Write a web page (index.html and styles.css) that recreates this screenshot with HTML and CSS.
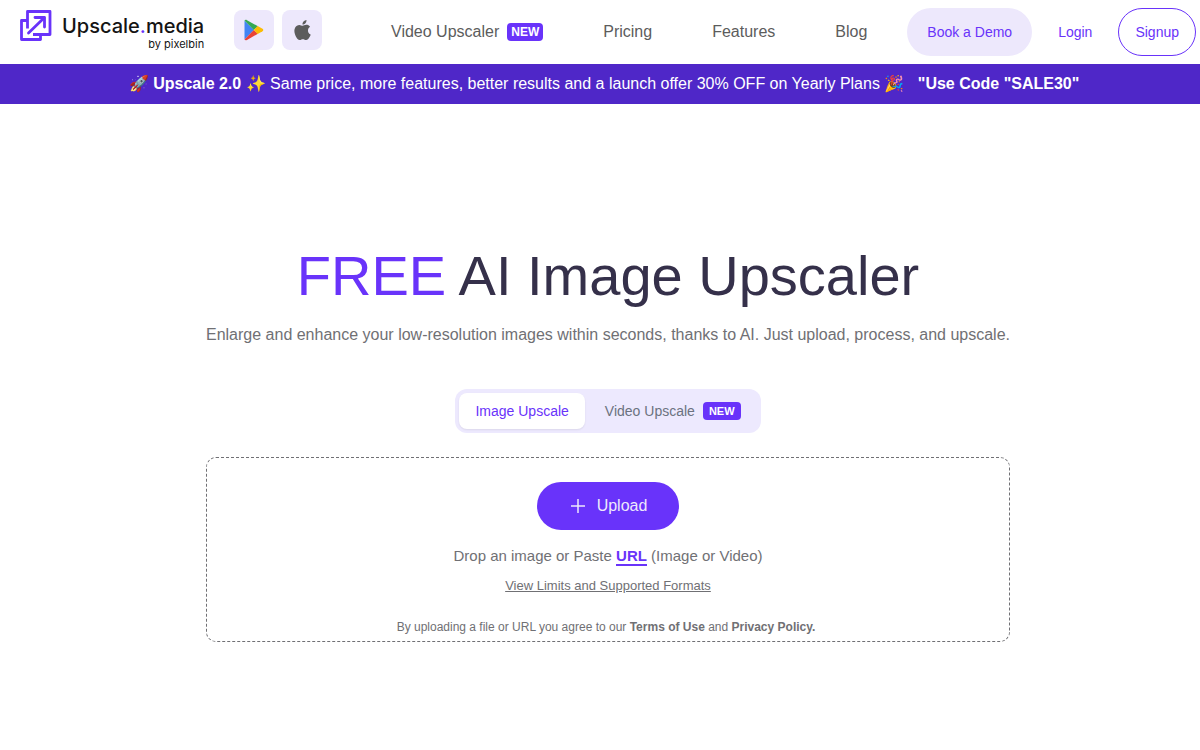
FILE: index.html
```html
<!DOCTYPE html>
<html lang="en">
<head>
<meta charset="utf-8">
<meta name="viewport" content="width=device-width, initial-scale=1">
<title>Upscale.media</title>
<link rel="stylesheet" href="styles.css">
</head>
<body>
<header class="header">
  <a class="logo" href="#">
    <svg class="logo-mark" viewBox="0 0 32 32" fill="none" stroke="currentColor" stroke-width="2.800" stroke-linejoin="round" aria-hidden="true">
      <path d="M7.500 10.500h-6v19h19v-5"/>
      <path d="M7.500 18.500V1.500h22.500v23H13"/>
      <path d="M8.500 23L24 8" stroke-linecap="round"/>
      <path d="M15 7.500h9.500V17" stroke-linecap="round"/>
    </svg>
    <span class="logo-text">
      <span class="logo-name">Upscale<span class="accent">.</span>media</span>
      <span class="logo-by">by pixelbin</span>
    </span>
  </a>
  <div class="stores">
    <a class="store" href="#" aria-label="Google Play">
      <svg class="play-icon" viewBox="0 0 20 22" aria-hidden="true">
        <path fill="#4285f4" d="M.500 1.500v19l9.500-9.500z"/>
        <path fill="#34a853" d="M.500 1.500C1 .7 2.100.7 3 1.200L14 7.300 9.800 11z"/>
        <path fill="#ea4335" d="M.500 20.500c.5.900 1.600.9 2.500.4L14 14.700 9.800 11z"/>
        <path fill="#fbbc04" d="M13.700 7l4.800 2.700c1 .6 1 2 0 2.600L13.700 15 9.800 11z"/>
      </svg>
    </a>
    <a class="store" href="#" aria-label="App Store">
      <svg class="apple-icon" viewBox="2 0 20 24" aria-hidden="true">
        <path fill="#5c5c5c" d="M12.152 6.896c-.948 0-2.415-1.078-3.960-1.040-2.040.027-3.910 1.183-4.961 3.014-2.117 3.675-.546 9.103 1.519 12.090 1.013 1.454 2.208 3.090 3.792 3.039 1.520-.065 2.090-.987 3.935-.987 1.831 0 2.350.987 3.960.948 1.637-.026 2.676-1.480 3.676-2.948 1.156-1.688 1.636-3.325 1.662-3.415-.039-.013-3.182-1.221-3.220-4.857-.026-3.040 2.480-4.494 2.597-4.559-1.429-2.090-3.623-2.324-4.390-2.376-2-.156-3.675 1.090-4.610 1.090zM15.530 3.830c.843-1.012 1.400-2.427 1.245-3.830-1.207.052-2.662.805-3.532 1.818-.780.896-1.454 2.338-1.273 3.714 1.338.104 2.715-.688 3.559-1.701"/>
      </svg>
    </a>
  </div>
  <nav class="nav">
    <a class="nav-link" href="#">Video Upscaler <span class="badge">NEW</span></a>
    <a class="nav-link" href="#">Pricing</a>
    <a class="nav-link" href="#">Features</a>
    <a class="nav-link" href="#">Blog</a>
  </nav>
  <div class="actions">
    <button class="btn btn-demo" type="button">Book a Demo</button>
    <button class="btn btn-login" type="button">Login</button>
    <button class="btn btn-signup" type="button">Signup</button>
  </div>
</header>
<aside class="banner">🚀 <b>Upscale 2.0</b> ✨ Same price, more features, better results and a launch offer 30% OFF on Yearly Plans 🎉 <b class="code">"Use Code "SALE30"</b></aside>
<main class="main">
  <section class="hero">
    <h1 class="title"><span class="accent">FREE</span> AI Image Upscaler</h1>
    <p class="subtitle">Enlarge and enhance your low-resolution images within seconds, thanks to AI. Just upload, process, and upscale.</p>
    <div class="tabs" role="tablist">
      <button class="tab tab-active" type="button" role="tab" aria-selected="true">Image Upscale</button>
      <button class="tab" type="button" role="tab" aria-selected="false">Video Upscale <span class="badge badge-small">NEW</span></button>
    </div>
    <div class="dropzone">
      <button class="upload" type="button">
        <svg class="plus" viewBox="0 0 20 20" fill="none" stroke="currentColor" stroke-width="1.500" aria-hidden="true"><path d="M9 3v14M2 10h14"/></svg>
        Upload
      </button>
      <p class="drop-text">Drop an image or Paste <a class="url" href="#">URL</a> (Image or Video)</p>
      <a class="limits" href="#">View Limits and Supported Formats</a>
      <p class="terms">By uploading a file or URL you agree to our <a class="legal" href="#">Terms of Use</a> and <a class="legal" href="#">Privacy Policy.</a></p>
    </div>
  </section>
</main>
</body>
</html>
```
FILE: styles.css
```css
* { box-sizing: border-box; }

body {
  margin: 0;
  background: #fff;
  color: #707074;
  font-family: "Liberation Sans", Arial, sans-serif;
}

a { color: inherit; text-decoration: none; }
button { font-family: inherit; border: 0; cursor: pointer; }
p, h1 { margin: 0; }
.accent { color: #6933fa; }

.header {
  display: flex;
  align-items: center;
  min-height: 64px;
  padding: 0 4px 0 20px;
}

.logo { display: flex; align-items: flex-start; gap: 10px; height: 44px; }
.logo-mark { width: 32px; height: 32px; color: #6933fa; }
.logo-text {
  display: flex;
  flex-direction: column;
  align-items: flex-end;
  padding-top: 4px;
  color: #141414;
  font-family: Inter, sans-serif;
}
.logo-name { font-size: 20px; line-height: 24px; font-weight: 500; }
.logo-by { font-size: 11px; line-height: 12px; }

.stores { display: flex; gap: 8px; margin-left: 30px; padding-bottom: 4px; }
.store {
  display: flex;
  align-items: center;
  justify-content: center;
  width: 40px;
  height: 40px;
  border-radius: 8px;
  background: #ede8fc;
}
.play-icon { width: 20px; height: 22px; }
.apple-icon { width: 17px; height: 20px; }

.nav { display: flex; gap: 60px; margin-left: auto; }
.nav-link {
  display: flex;
  align-items: center;
  gap: 8px;
  color: #5c5c5c;
  font-size: 16px;
  line-height: 20px;
}

.badge {
  padding: 0 4px;
  border-radius: 4px;
  background: #6933fa;
  color: #fff;
  font-size: 12px;
  line-height: 18px;
  font-weight: 700;
}
.badge-small { padding: 0 6px; font-size: 11px; }

.actions { display: flex; align-items: center; margin-left: 40px; }
.btn {
  height: 48px;
  border-radius: 24px;
  background: none;
  color: #6933fa;
  font-size: 14px;
}
.btn-demo { padding: 0 20px; background: #ede8fc; }
.btn-login { padding: 0 26px; }
.btn-signup { padding: 0 16px; border: 1px solid #6933fa; }

.banner {
  padding: 8px 0 8px 8px;
  background: #4f27c8;
  color: #fff;
  font-size: 16px;
  line-height: 24px;
  text-align: center;
}
.code { margin-left: 9px; }

.main {
  display: flex;
  justify-content: center;
  padding: 140px 0 108px 16px;
}
.hero { display: flex; flex-direction: column; align-items: center; }
.title {
  color: #35304a;
  font-size: 56px;
  line-height: 64px;
  font-weight: 400;
}
.subtitle { margin-top: 15px; font-size: 16px; line-height: 24px; }

.tabs {
  display: flex;
  gap: 4px;
  margin-top: 42px;
  padding: 4px;
  border-radius: 12px;
  background: #ede9fe;
}
.tab {
  display: flex;
  align-items: center;
  gap: 8px;
  height: 36px;
  padding: 0 16px;
  border-radius: 8px;
  background: none;
  color: #6b7280;
  font-size: 14px;
}
.tab-active {
  background: #fff;
  color: #6933fa;
  box-shadow: 0 1px 2px rgba(0, 0, 0, 0.08);
}

.dropzone {
  display: flex;
  flex-direction: column;
  align-items: center;
  align-self: stretch;
  margin-top: 24px;
  padding: 24px 16px 6px;
  border: 1px dashed #707074;
  border-radius: 10px;
}
.upload {
  display: flex;
  align-items: center;
  gap: 8px;
  height: 48px;
  padding: 0 32px;
  border-radius: 24px;
  background: #6933fa;
  color: #ede8fc;
  font-size: 16px;
}
.plus { width: 20px; height: 20px; }
.drop-text { margin-top: 16px; font-size: 15px; line-height: 20px; }
.url { color: #6933fa; font-weight: 700; border-bottom: 2px solid #6933fa; }
.limits {
  margin-top: 12px;
  font-size: 13px;
  line-height: 16px;
  text-decoration: underline;
}
.terms { margin-top: 25px; padding-right: 4px; font-size: 12px; line-height: 16px; }
.legal { font-weight: 700; }
```
